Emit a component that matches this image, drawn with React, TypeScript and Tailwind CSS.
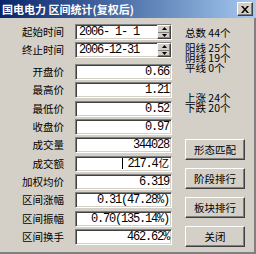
import React from 'react';

const cjk = "font-['Noto_Sans_CJK_SC',sans-serif]";
const mono = "font-['Liberation_Mono','Noto_Sans_CJK_SC',monospace]";

// sunken win2000 edit box
const sunken =
    'border border-t-[#808080] border-l-[#808080] border-b-white border-r-white shadow-[inset_1px_1px_0_#404040,inset_-1px_-1px_0_#d4d0c8] bg-white';
const raised =
    'border border-t-white border-l-white border-b-[#404040] border-r-[#404040] shadow-[inset_-1px_-1px_0_#808080] bg-[#d4d0c8]';

const fields: { label: string; value: string; unit?: string; caret?: boolean }[] = [
    { label: '开盘价', value: '0.66' },
    { label: '最高价', value: '1.21' },
    { label: '最低价', value: '0.52' },
    { label: '收盘价', value: '0.97' },
    { label: '成交量', value: '344028' },
    { label: '成交额', value: '217.4', unit: '亿', caret: true },
    { label: '加权均价', value: '6.319' },
    { label: '区间涨幅', value: '0.31(47.28%)' },
    { label: '区间振幅', value: '0.70(135.14%)' },
    { label: '区间换手', value: '462.62%' },
];

const Label: React.FC<{ text: string }> = ({ text }) => (
    <span className={`${cjk} w-[64px] text-right text-[10.5px] leading-[16px] text-black`}>{text}</span>
);

const Spinner = () => (
    <div className={`${raised} ml-auto w-[14px] h-full flex flex-col`}>
        <div className="flex-1 flex items-center justify-center border-b border-[#808080]">
            <svg width="5" height="3" viewBox="0 0 5 3">
                <path d="M2.5 0L5 3H0z" fill="#000" />
            </svg>
        </div>
        <div className="flex-1 flex items-center justify-center">
            <svg width="5" height="3" viewBox="0 0 5 3">
                <path d="M0 0h5L2.5 3z" fill="#000" />
            </svg>
        </div>
    </div>
);

const DateRow: React.FC<{ label: string; value: string }> = ({ label, value }) => (
    <div className="flex items-center gap-[11px]">
        <Label text={label} />
        <div className={`${sunken} w-[97px] h-[16px] flex items-center pl-[3px]`}>
            <span className={`${mono} text-[12px] tracking-[-1.2px] whitespace-pre leading-none text-black`}>{value}</span>
            <Spinner />
        </div>
    </div>
);

const Btn: React.FC<{ text: string }> = ({ text }) => (
    <div className={`${raised} ${cjk} w-[60px] h-[21px] flex items-center justify-center text-[10.5px] text-black`}>{text}</div>
);

const Stat: React.FC<{ text: string }> = ({ text }) => (
    <div className="h-[10px] leading-[10px] whitespace-pre">{text}</div>
);

const App: React.FC = () => {
    return (
        <div className="w-[256px] h-[254px] bg-[#d4d0c8] flex flex-col overflow-hidden">
            {/* title bar */}
            <div className="h-[18px] flex items-center pl-[2px] pr-[3px] bg-linear-to-r from-[#0a246a] to-[#a6caf0]">
                <span className={`${cjk} text-[11px] font-bold text-white whitespace-pre leading-none`}>国电电力 区间统计(复权后)</span>
                <div className={`${raised} ml-auto w-[16px] h-[14px] flex items-center justify-center`}>
                    <svg width="8" height="7" viewBox="0 0 8 7">
                        <path d="M0 0h2l2 2.5L6 0h2L5 3.5 8 7H6L4 4.5 2 7H0l3-3.5z" fill="#000" />
                    </svg>
                </div>
            </div>

            {/* body */}
            <div className="flex-1 flex border-r-2 border-b-2 border-r-[#808080] border-b-[#808080]">
                {/* left: labels and fields */}
                <div className="w-[174px] flex flex-col pt-[6px]">
                    <div className="flex flex-col gap-[2px]">
                        <DateRow label="起始时间" value="2006- 1- 1" />
                        <DateRow label="终止时间" value="2006-12-31" />
                    </div>
                    <div className="mt-[6px] h-[181px] flex flex-col justify-between">
                        {fields.map((f) => (
                            <div key={f.label} className="flex items-center gap-[11px]">
                                <Label text={f.label} />
                                <div className={`${sunken} w-[97px] h-[16px] flex items-center justify-end pr-[2px]`}>
                                    {f.caret && <span className="w-px h-[11px] bg-black mr-[4px]" />}
                                    <span className={`${mono} text-[12px] tracking-[-1.2px] whitespace-pre leading-none text-black`}>{f.value}</span>
                                    {f.unit && <span className={`${cjk} text-[10.5px] leading-none text-black ml-[1px]`}>{f.unit}</span>}
                                </div>
                            </div>
                        ))}
                    </div>
                </div>

                {/* right: stats and buttons */}
                <div className={`${cjk} flex-1 flex flex-col pl-[11px] pt-[10px] text-[10.5px] text-black`}>
                    <Stat text="总数 44个" />
                    <div className="mt-[5px] flex flex-col">
                        <Stat text="阳线 25个" />
                        <Stat text="阴线 19个" />
                        <Stat text="平线 0个" />
                    </div>
                    <div className="mt-[20px] flex flex-col">
                        <Stat text="上涨 24个" />
                        <Stat text="下跌 20个" />
                    </div>
                    <div className="mt-[26px] flex flex-col gap-[8px]">
                        <Btn text="形态匹配" />
                        <Btn text="阶段排行" />
                        <Btn text="板块排行" />
                        <Btn text="关闭" />
                    </div>
                </div>
            </div>
        </div>
    );
};

export default App;
